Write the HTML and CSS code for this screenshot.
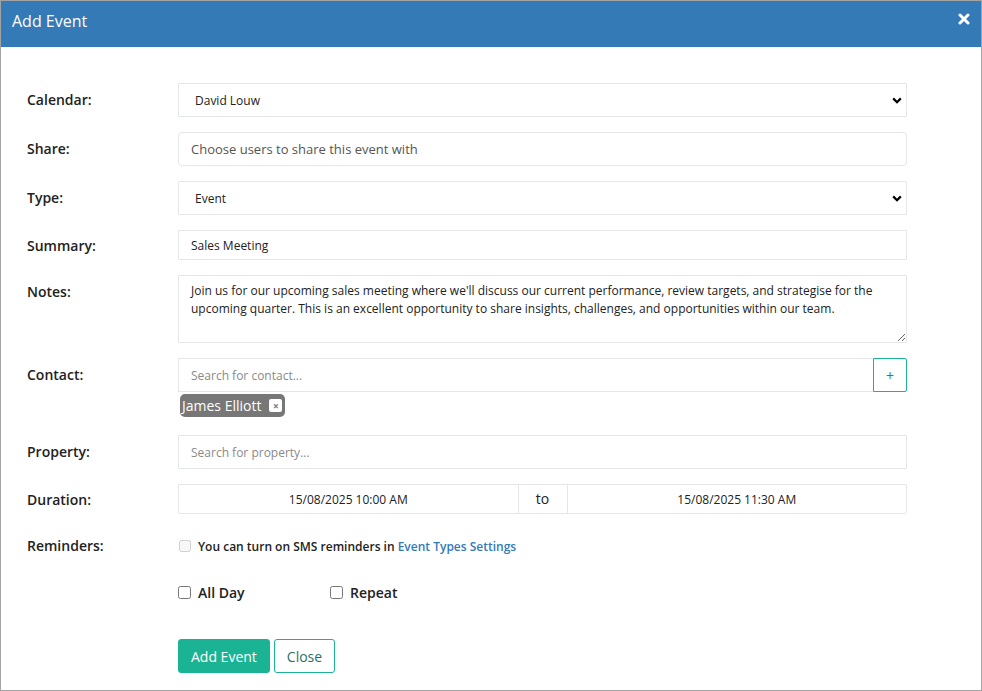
FILE: index.html
```html
<!DOCTYPE html>
<html>
<head>
<meta charset="utf-8">
<link rel="stylesheet" href="styles.css">
</head>
<body>
<div class="modal">
  <div class="modal-header">
    <h4 class="modal-title">Add Event</h4>
    <button class="close-btn" aria-label="Close">
      <svg width="12" height="12" viewBox="0 0 12 12"><path d="M2 2 L10 10 M10 2 L2 10" stroke="#fff" stroke-width="3" stroke-linecap="round"/></svg>
    </button>
  </div>
  <div class="modal-body">
    <div class="row">
      <label class="lbl">Calendar:</label>
      <select class="ctrl select"><option>David Louw</option></select>
    </div>
    <div class="row">
      <label class="lbl">Share:</label>
      <input class="ctrl share" placeholder="Choose users to share this event with">
    </div>
    <div class="row">
      <label class="lbl">Type:</label>
      <select class="ctrl select"><option>Event</option></select>
    </div>
    <div class="row row-s">
      <label class="lbl">Summary:</label>
      <input class="ctrl short" value="Sales Meeting">
    </div>
    <div class="row">
      <label class="lbl">Notes:</label>
      <textarea class="ctrl notes">Join us for our upcoming sales meeting where we'll discuss our current performance, review targets, and strategise for the upcoming quarter. This is an excellent opportunity to share insights, challenges, and opportunities within our team.</textarea>
    </div>
    <div class="row row-tag">
      <label class="lbl">Contact:</label>
      <div class="field">
        <div class="input-group">
          <input class="ctrl grow" placeholder="Search for contact...">
          <button class="add-btn">+</button>
        </div>
        <div class="tags">
          <span class="tag">James Elliott <span class="tag-x">×</span></span>
        </div>
      </div>
    </div>
    <div class="row">
      <label class="lbl">Property:</label>
      <input class="ctrl" placeholder="Search for property...">
    </div>
    <div class="row row-s">
      <label class="lbl">Duration:</label>
      <div class="duration">
        <div class="dt">15/08/2025 10:00 AM</div>
        <div class="to">to</div>
        <div class="dt">15/08/2025 11:30 AM</div>
      </div>
    </div>
    <div class="row row-check">
      <label class="lbl">Reminders:</label>
      <div class="reminder">
        <input type="checkbox" disabled>
        <span>You can turn on SMS reminders in <a href="#">Event Types Settings</a></span>
      </div>
    </div>
    <div class="row row-check2">
      <span class="lbl"></span>
      <div class="checks">
        <label class="check"><input type="checkbox"> All Day</label>
        <label class="check"><input type="checkbox"> Repeat</label>
      </div>
    </div>
    <div class="row">
      <span class="lbl"></span>
      <div class="buttons">
        <button class="btn primary">Add Event</button>
        <button class="btn outline">Close</button>
      </div>
    </div>
  </div>
</div>
</body>
</html>
```

FILE: styles.css
```css
* { box-sizing: border-box; }
html, body { margin: 0; padding: 0; background: #fff; }
body { font-family: "Open Sans", "Liberation Sans", sans-serif; color: #222; }

.modal {
  width: 982px;
  height: 691px;
  border: 1px solid #a3a3a3;
  background: #fff;
  overflow: hidden;
}
.modal-header {
  height: 46px;
  background: #337ab7;
  display: flex;
  align-items: center;
  justify-content: space-between;
  padding: 0 11px 0 11px;
}
.modal-title {
  margin: 0;
  font-size: 16px;
  font-weight: 400;
  color: #fff;
  line-height: 20px;
  padding-bottom: 6px;
}
.close-btn {
  background: none;
  border: 0;
  padding: 0;
  width: 12px;
  height: 12px;
  display: flex;
  margin-bottom: 10px;
}
.modal-body {
  padding: 36px 0 0 26px;
}
.row {
  display: grid;
  grid-template-columns: 151px 729px;
  margin-bottom: 15px;
  align-items: start;
}
.row-tag { margin-bottom: 18px; }
.lbl {
  font-size: 14px;
  font-weight: 600;
  line-height: 34px;
  height: 34px;
  color: #222;
}
.row-s .lbl { line-height: 32px; height: 30px; }
.ctrl {
  width: 100%;
  height: 34px;
  border: 1px solid #e5e6e7;
  border-radius: 1px;
  background: #fff;
  font-family: "Open Sans", "Liberation Sans", sans-serif;
  font-size: 12px;
  color: #222;
  padding: 0 12px;
  outline: none;
}
.ctrl::placeholder { color: #8a8a8a; }
.select {
  appearance: none;
  -webkit-appearance: none;
  padding-left: 16px;
  background-image: url("data:image/svg+xml;utf8,<svg xmlns='http://www.w3.org/2000/svg' width='10' height='7' viewBox='0 0 10 7'><path d='M1.2 1.4 L5 5.2 L8.8 1.4' fill='none' stroke='black' stroke-width='2.2'/></svg>");
  background-repeat: no-repeat;
  background-position: right 4px center;
}
.share {
  border-radius: 4px;
  font-size: 13px;
}
.share::placeholder { color: #555; }
.short { height: 30px; }
.notes {
  height: 68px;
  padding: 6px 12px;
  line-height: 18px;
  resize: vertical;
  display: block;
}
.field { display: flex; flex-direction: column; }
.input-group { display: flex; }
.grow { flex: 1; border-right: 0; }
.add-btn {
  width: 34px;
  height: 34px;
  border: 1px solid #1ab394;
  border-radius: 0 2px 2px 0;
  background: #fff;
  color: #1a8b73;
  font-size: 14px;
  font-family: "Open Sans", "Liberation Sans", sans-serif;
  padding: 0;
}
.tags { margin-top: 2px; padding-left: 2px; display: flex; }
.tag {
  display: inline-flex;
  align-items: center;
  height: 23px;
  background: #777;
  color: #fff;
  font-size: 14px;
  font-weight: 400;
  border-radius: 5px;
  padding: 0 3px 0 2px;
  gap: 8px;
}
.tag-x {
  display: inline-flex;
  align-items: center;
  justify-content: center;
  width: 13px;
  height: 13px;
  background: #fff;
  color: #777;
  font-size: 10px;
  font-weight: 700;
  border-radius: 2px;
  line-height: 1;
}
.duration {
  display: flex;
  height: 30px;
  border: 1px solid #e5e6e7;
  border-radius: 2px;
}
.dt {
  flex: 1;
  display: flex;
  align-items: center;
  justify-content: center;
  font-size: 12px;
  color: #222;
}
.to {
  width: 50px;
  border-left: 1px solid #e5e6e7;
  border-right: 1px solid #e5e6e7;
  display: flex;
  align-items: center;
  justify-content: center;
  font-size: 14px;
  color: #222;
  padding-bottom: 1px;
}
.row-check { margin-bottom: 12px; }
.reminder {
  height: 34px;
  display: flex;
  align-items: center;
  gap: 7px;
  font-size: 12px;
  font-weight: 600;
  color: #222;
  padding-left: 1px;
}
.reminder input { margin: 0; width: 12px; height: 12px; }
.reminder a { color: #337ab7; text-decoration: none; }
.row-check2 { margin-bottom: 30px; }
.checks {
  height: 34px;
  display: flex;
  align-items: center;
}
.check {
  display: flex;
  align-items: center;
  gap: 7px;
  font-size: 14px;
  font-weight: 600;
  color: #222;
  width: 152px;
}
.check input { margin: 0; width: 13px; height: 13px; }
.buttons { display: flex; gap: 4px; }
.btn {
  height: 34px;
  font-family: "Open Sans", "Liberation Sans", sans-serif;
  font-size: 14px;
  border-radius: 3px;
  padding: 0 12px;
}
.primary {
  background: #1ab394;
  border: 1px solid #1ab394;
  color: #fff;
}
.outline {
  background: #fff;
  border: 1px solid #1ab394;
  color: #2b6f6a;
}
```
